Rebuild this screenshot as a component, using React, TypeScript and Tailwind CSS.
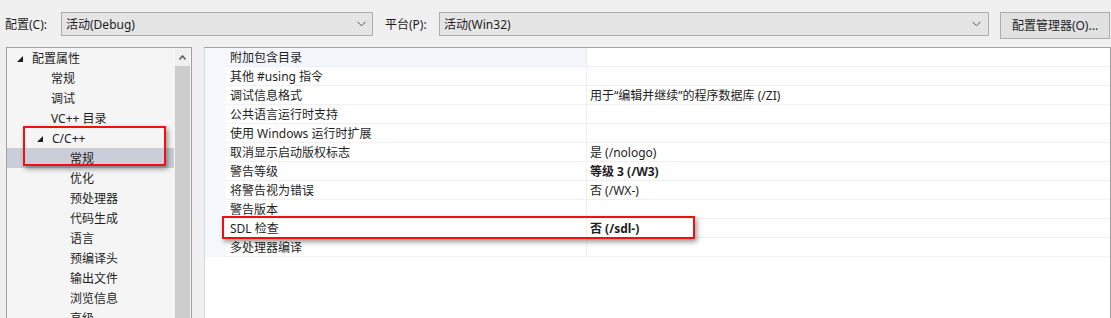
import React from "react";

const FONT = { fontFamily: '"Noto Sans", "Noto Sans CJK SC", sans-serif' };

function Chevron() {
  return (
    <svg width="9" height="6" viewBox="0 0 9 6" className="shrink-0">
      <polyline points="0.5,0.8 4.5,4.8 8.5,0.8" fill="none" stroke="#555" strokeWidth="1" />
    </svg>
  );
}

function Tri() {
  return (
    <svg width="6" height="6" viewBox="0 0 6 6" className="shrink-0">
      <polygon points="6,0 6,6 0,6" fill="#1e1e1e" />
    </svg>
  );
}

type TreeItem = { label: string; level: number; expander?: boolean; selected?: boolean };

const tree: TreeItem[] = [
  { label: "配置属性", level: 0, expander: true },
  { label: "常规", level: 1 },
  { label: "调试", level: 1 },
  { label: "VC++ 目录", level: 1 },
  { label: "C/C++", level: 1, expander: true },
  { label: "常规", level: 2, selected: true },
  { label: "优化", level: 2 },
  { label: "预处理器", level: 2 },
  { label: "代码生成", level: 2 },
  { label: "语言", level: 2 },
  { label: "预编译头", level: 2 },
  { label: "输出文件", level: 2 },
  { label: "浏览信息", level: 2 },
  { label: "高级", level: 2 },
];

const indent = ["pl-[25px]", "pl-[44px]", "pl-[63px]"];
const triIndent = ["pl-[10px]", "pl-[30px]", "pl-[49px]"];

type Row = { name: string; value?: string; bold?: boolean; hl?: boolean };
const rows: Row[] = [
  { name: "附加包含目录", hl: true },
  { name: "其他 #using 指令" },
  { name: "调试信息格式", value: "用于“编辑并继续”的程序数据库 (/ZI)" },
  { name: "公共语言运行时支持" },
  { name: "使用 Windows 运行时扩展" },
  { name: "取消显示启动版权标志", value: "是 (/nologo)" },
  { name: "警告等级", value: "等级 3 (/W3)", bold: true },
  { name: "将警告视为错误", value: "否 (/WX-)" },
  { name: "警告版本" },
  { name: "SDL 检查", value: "否 (/sdl-)", bold: true },
  { name: "多处理器编译" },
];

export default function App() {
  return (
    <div
      className="relative w-[1111px] h-[318px] overflow-hidden bg-[#f0f0f0] text-[12px] text-[#1e1e1e] flex flex-col"
      style={FONT}
    >
      {/* top bar */}
      <div className="h-[47px] shrink-0 flex items-start pt-[12px] pl-[5px]">
        <div className="h-[24px] w-[56px] flex items-center pt-[1px]">配置(C):</div>
        <div className="h-[24px] w-[312px] border border-[#adadad] bg-[#e5e5e5] flex items-center pl-[4px] pr-[6px] justify-between">
          <span className="pt-[1px]">活动(Debug)</span>
          <Chevron />
        </div>
        <div className="h-[24px] w-[54px] ml-[12px] flex items-center pt-[1px]">平台(P):</div>
        <div className="h-[24px] w-[550px] border border-[#adadad] bg-[#e5e5e5] flex items-center pl-[4px] pr-[7px] justify-between">
          <span className="pt-[1px]">活动(Win32)</span>
          <Chevron />
        </div>
        <div className="ml-[11px] h-[27px] w-[110px] border border-[#adadad] bg-[#e1e1e1] flex items-center justify-center pt-[1px]">
          配置管理器(O)...
        </div>
      </div>

      {/* panels */}
      <div className="flex flex-1 min-h-0">
        {/* tree */}
        <div className="ml-[6px] w-[186px] border border-[#a0a0a0] border-b-0 bg-[#f5f5f5] flex">
          <div className="w-[167px] flex flex-col">
            {tree.map((t, i) => (
              <div
                key={i}
                className={`h-[20px] shrink-0 flex items-center ${
                  t.selected ? "bg-[#cbcdd9]" : ""
                } ${t.expander ? triIndent[t.level] : indent[t.level]}`}
              >
                {t.expander && (
                  <span className="w-[15px] flex items-center pt-[1px]">
                    <Tri />
                  </span>
                )}
                <span className="leading-none pt-[2px]">{t.label}</span>
              </div>
            ))}
          </div>
          <div className="w-[15px] ml-[1px] flex flex-col bg-[#f0f0f0]">
            <div className="h-[18px] flex items-center justify-center">
              <svg width="7" height="5" viewBox="0 0 7 5">
                <polyline points="0.5,4.5 3.5,1 6.5,4.5" fill="none" stroke="#606060" strokeWidth="1.6" />
              </svg>
            </div>
            <div className="flex-1 bg-[#cdcdcd]" />
          </div>
        </div>

        {/* property grid */}
        <div className="ml-[12px] flex-1 border-t border-l border-r border-t-[#a0a0a0] border-l-[#dadada] border-r-[#a0a0a0] bg-white flex flex-col">
          {rows.map((r, i) => (
            <div key={i} className="h-[19px] shrink-0 flex">
              <div className="w-[21px] bg-[#f5f8fc]" />
              <div
                className={`w-[361px] flex items-center pl-[4px] pt-[1px] border-b border-r border-[#f0f0f0] ${
                  r.hl ? "bg-[#f3f6fb]" : ""
                }`}
              >
                {r.name}
              </div>
              <div
                className={`flex-1 flex items-center pl-[3px] pt-[1px] border-b border-[#f0f0f0] ${
                  r.bold ? "font-bold" : ""
                }`}
              >
                {r.value ?? ""}
              </div>
            </div>
          ))}
        </div>
      </div>

      {/* red highlight overlays */}
      <div className="absolute left-[23px] top-[126px] w-[143px] h-[40px] border-2 border-[#ee1111] shadow-[2px_3px_5px_rgba(0,0,0,0.4)]" />
      <div className="absolute left-[222px] top-[216px] w-[473px] h-[23px] border-2 border-[#ee1111] shadow-[2px_3px_5px_rgba(0,0,0,0.4)]" />
    </div>
  );
}
